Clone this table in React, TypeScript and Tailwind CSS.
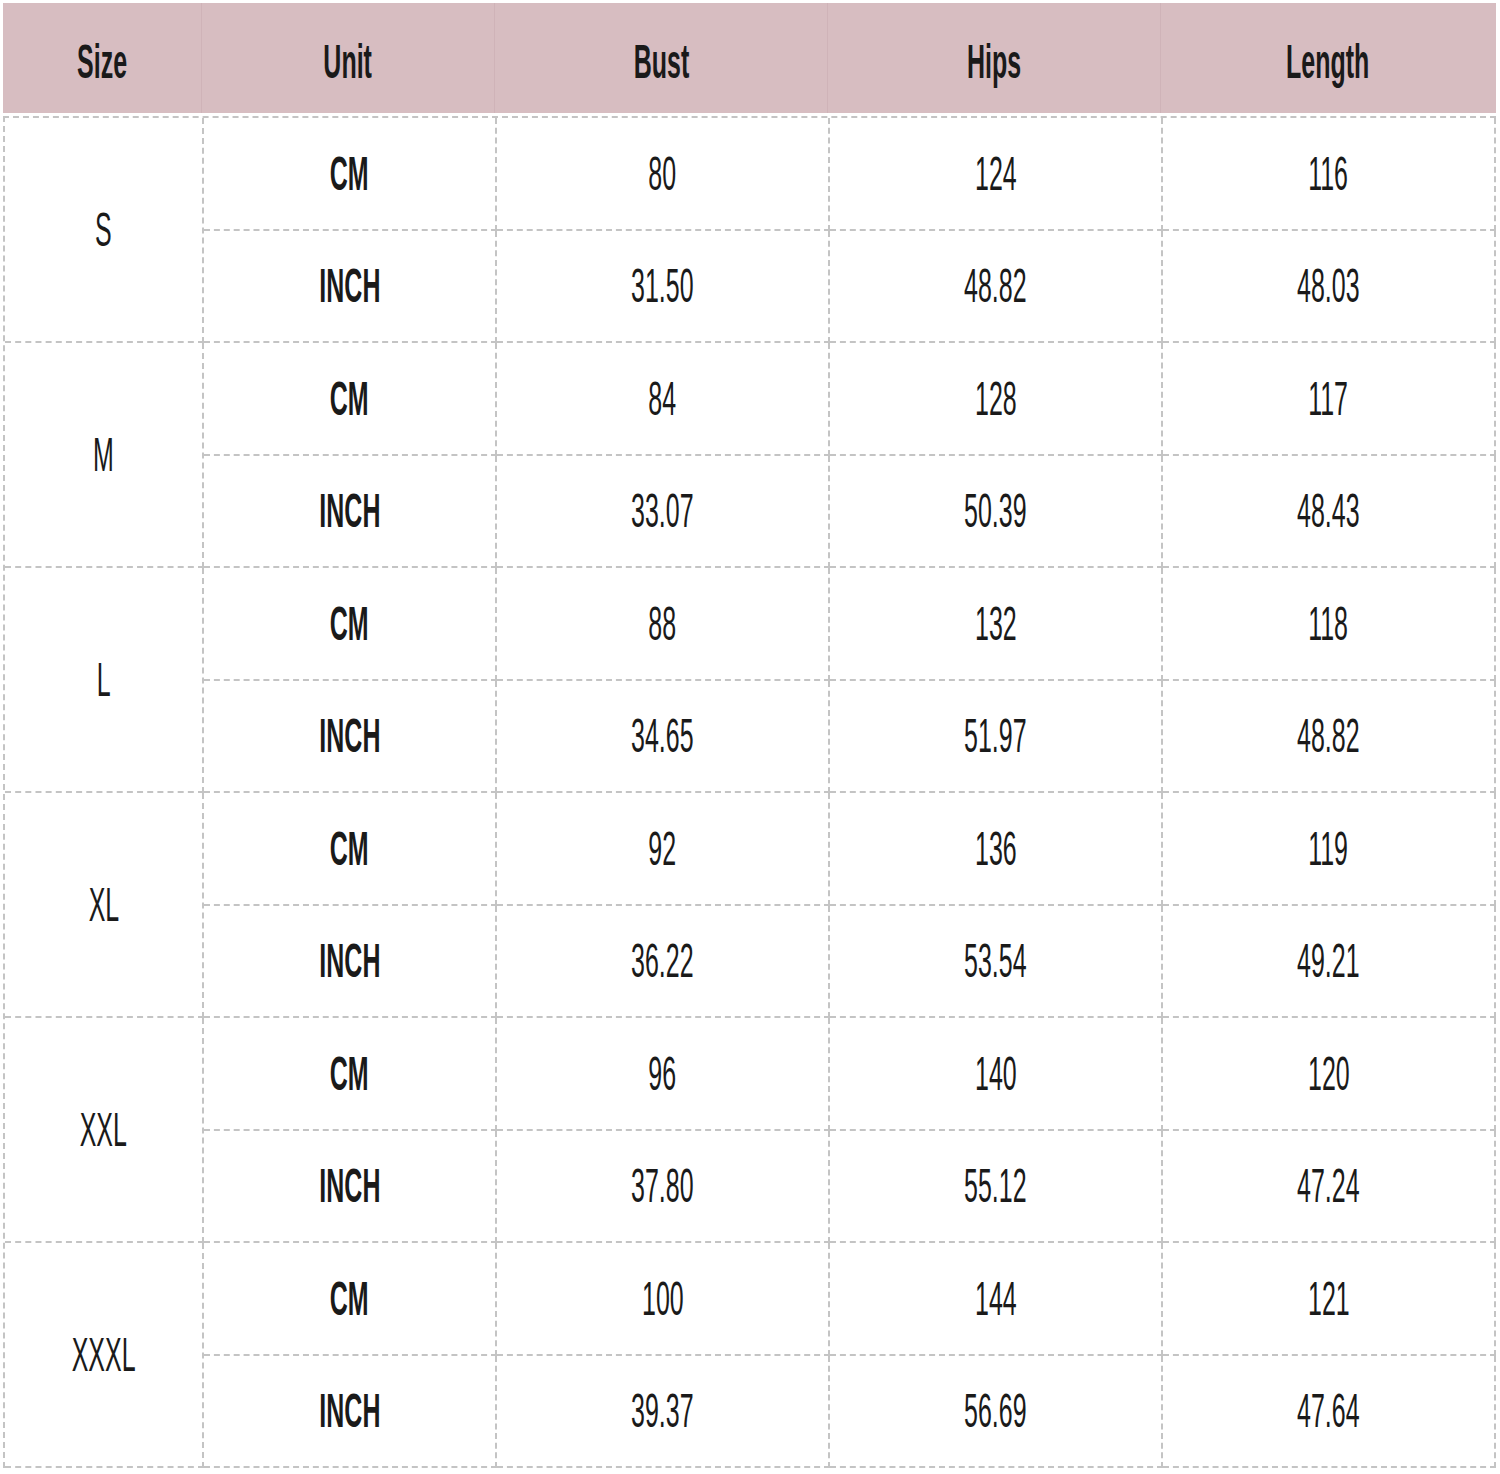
const rows = [
  { size: 'S', cm: ['80', '124', '116'], inch: ['31.50', '48.82', '48.03'] },
  { size: 'M', cm: ['84', '128', '117'], inch: ['33.07', '50.39', '48.43'] },
  { size: 'L', cm: ['88', '132', '118'], inch: ['34.65', '51.97', '48.82'] },
  { size: 'XL', cm: ['92', '136', '119'], inch: ['36.22', '53.54', '49.21'] },
  { size: 'XXL', cm: ['96', '140', '120'], inch: ['37.80', '55.12', '47.24'] },
  { size: 'XXXL', cm: ['100', '144', '121'], inch: ['39.37', '56.69', '47.64'] },
]

const cols = 'grid grid-cols-[199px_293px_333px_333px_333px]'

function Txt({ children, bold }: { children: React.ReactNode; bold?: boolean }) {
  return (
    <span
      className={
        'inline-block scale-x-[0.51] text-[49px] leading-none text-[#1a1a1a] ' + (bold ? 'font-bold' : 'font-normal')
      }
    >
      {children}
    </span>
  )
}

function Cell({ children, bold, className = '' }: { children: React.ReactNode; bold?: boolean; className?: string }) {
  return (
    <div className={'flex items-center justify-center border-r-2 border-b-2 border-dashed border-[#c4c4c4] ' + className}>
      <Txt bold={bold}>{children}</Txt>
    </div>
  )
}

export default function App() {
  return (
    <div className="w-[1500px] h-[1474px] bg-white pt-[3px] pl-[3px] font-['Liberation_Sans',Arial,sans-serif]">
      {/* Header */}
      <div className={cols + ' h-[110px] w-[1493px] bg-[#d7bdc1]'}>
        {['Size', 'Unit', 'Bust', 'Hips', 'Length'].map((h, i) => (
          <div
            key={h}
            className={'flex items-center justify-center pt-[6px] ' + (i < 4 ? 'border-r border-[#cfb3b8]' : '')}
          >
            <Txt bold>{h}</Txt>
          </div>
        ))}
      </div>

      {/* Body */}
      <div className={cols + ' grid-rows-[repeat(12,112.5px)] mt-[3px] border-t-2 border-l-2 border-dashed border-[#c4c4c4] w-[1493px]'}>
        {rows.map((r) => (
          <div key={r.size} className="contents">
            <div className="row-span-2 flex items-center justify-center border-r-2 border-b-2 border-dashed border-[#c4c4c4]">
              <Txt>{r.size}</Txt>
            </div>
            <Cell bold>CM</Cell>
            {r.cm.map((v, i) => (
              <Cell key={'c' + i}>{v}</Cell>
            ))}
            <Cell bold>INCH</Cell>
            {r.inch.map((v, i) => (
              <Cell key={'i' + i}>{v}</Cell>
            ))}
          </div>
        ))}
      </div>
    </div>
  )
}
